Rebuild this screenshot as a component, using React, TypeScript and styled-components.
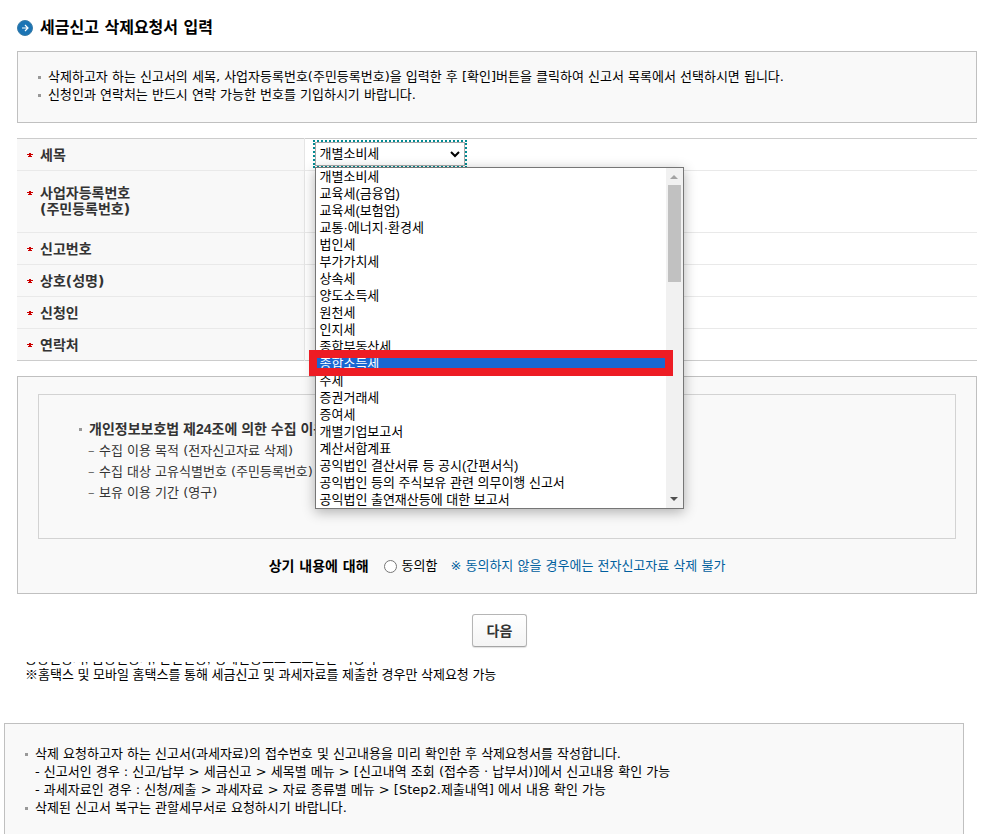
import React, { useState } from "react";
import styled, { createGlobalStyle, css } from "styled-components";

const bodyFont = `"DejaVu Sans", "Noto Sans CJK KR", sans-serif`;
const compactFont = `"Liberation Sans", "Noto Sans CJK KR", sans-serif`;

const GlobalStyle = createGlobalStyle`
  * { box-sizing: border-box; }
  body {
    margin: 0;
    background: #fff;
    color: #000;
    font: 13px/18px ${bodyFont};
    word-break: keep-all;
  }
  h1, p, ul { margin: 0; padding: 0; }
  ul { list-style: none; }
`;

const Page = styled.div`
  display: flex;
  flex-direction: column;
  min-height: 100vh;
`;

const Main = styled.main`
  padding: 18px 12px 0 17px;
`;

const Title = styled.h1`
  display: flex;
  align-items: center;
  gap: 7px;
  height: 20px;
  font-size: 16px;
  line-height: 20px;
`;

const Panel = styled.section`
  border: 1px solid #c0c0c0;
  background: #f9f9f9;
`;

const Notice = styled(Panel)`
  margin-top: 13px;
  min-height: 72px;
  padding: 16px 20px;
`;

const bullet = css`
  &::before {
    content: "";
    flex: none;
    width: 3px;
    height: 3px;
    margin-right: 7px;
    background: #999;
  }
`;

const BulletItem = styled.li`
  display: flex;
  align-items: center;
  ${bullet}
`;

const SubItem = styled.li`
  padding-left: 10px;
`;

const FormTable = styled.table`
  width: 100%;
  margin-top: 15px;
  border-collapse: collapse;
  table-layout: fixed;
  border-top: 1px solid #ccc;
  border-bottom: 1px solid #ccc;
`;

const FormRow = styled.tr<{ $tall?: boolean }>`
  height: ${(p) => (p.$tall ? 62 : 32)}px;
  & + & {
    border-top: 1px solid #e9e9e9;
  }
`;

const LabelCell = styled.th`
  width: 287px;
  padding: 0 10px;
  border-right: 1px solid #e5e5e5;
  background: #f8f8f8;
  color: #333;
  font-size: 14px;
  line-height: 16px;
  text-align: left;
  vertical-align: middle;
`;

const LabelText = styled.span<{ $tall?: boolean }>`
  display: flex;
  gap: 7px;
  padding-bottom: ${(p) => (p.$tall ? 2 : 0)}px;
`;

const Required = styled.span`
  display: flex;
  width: 6px;
  height: 16px;
  align-items: center;
`;

const FieldCell = styled.td`
  padding: 1px 0 0 8px;
  vertical-align: top;
`;

const SelectWrap = styled.div`
  position: relative;
  width: 154px;
  height: 28px;
  border: 2px dotted #008a91;
  font-family: ${compactFont};
`;

const TaxSelect = styled.select`
  display: block;
  width: 100%;
  height: 24px;
  padding: 0 20px 0 4px;
  border: 1px solid #aaa;
  border-radius: 0;
  outline: 0;
  appearance: none;
  background: #fff;
  color: #000;
  font: inherit;
`;

const Chevron = styled.svg`
  position: absolute;
  top: 9px;
  right: 5px;
  pointer-events: none;
`;

const Popup = styled.div`
  position: absolute;
  z-index: 2;
  top: 25px;
  left: 0;
  display: flex;
  width: 369px;
  border: 1px solid #767676;
  background: #fff;
  box-shadow: 0 3px 12px rgba(0, 0, 0, 0.3);
`;

const OptionList = styled.ul`
  flex: 1;
`;

const Option = styled.li<{ $active: boolean }>`
  position: relative;
  height: 17px;
  padding-left: 4px;
  line-height: 17px;
  white-space: nowrap;
  cursor: default;
  background: ${(p) => (p.$active ? "#1967d2" : "#fff")};
  color: ${(p) => (p.$active ? "#fff" : "#000")};
`;

const Highlight = styled.span`
  position: absolute;
  z-index: 1;
  top: -5px;
  right: -7px;
  bottom: -4px;
  left: -7px;
  border: 8px solid #ed1c24;
`;

const ScrollTrack = styled.div`
  display: flex;
  flex-direction: column;
  align-items: center;
  width: 17px;
  padding: 7px 0;
  background: #f1f1f1;
`;

const ScrollThumb = styled.div`
  width: 13px;
  height: 97px;
  margin: 6px 0 auto;
  background: #c1c1c1;
`;

const Consent = styled(Panel)`
  margin-top: 15px;
  padding: 17px 20px 18px;
`;

const ConsentText = styled.div`
  min-height: 145px;
  padding: 24px 40px;
  border: 1px solid #d3d3d3;
  color: #333;
  line-height: 21px;
`;

const ConsentHead = styled.p`
  display: flex;
  align-items: center;
  font-family: ${compactFont};
  font-size: 14px;
  font-weight: bold;
  white-space: nowrap;
  ${bullet}
`;

const DashItem = styled.li`
  display: flex;
  padding-left: 9px;
  &::before {
    content: "–";
    width: 11px;
    color: #666;
  }
`;

const AgreeRow = styled.div`
  display: flex;
  flex-wrap: wrap;
  align-items: center;
  justify-content: center;
  margin-top: 18px;
  line-height: 18px;
`;

const AgreeTitle = styled.strong`
  margin-right: 15px;
  font-size: 14px;
`;

const AgreeLabel = styled.label`
  display: flex;
  align-items: center;
  gap: 5px;
  margin-right: 13px;
`;

const Radio = styled.input`
  width: 13px;
  height: 13px;
  margin: 0;
`;

const AgreeNote = styled.span`
  color: #005f9e;
`;

const Actions = styled.div`
  display: flex;
  justify-content: center;
  padding: 20px 0 0 5px;
`;

const NextButton = styled.button`
  height: 33px;
  padding: 0 14px;
  border: 1px solid #b5b5b5;
  border-bottom-color: #a5a5a5;
  border-radius: 3px;
  background: linear-gradient(#fff, #f4f4f4);
  box-shadow: 0 1px 1px rgba(0, 0, 0, 0.12);
  color: #333;
  font: bold 14px/20px ${bodyFont};
`;

const Remarks = styled.div`
  padding: 15px 8px 0;
  font-family: ${compactFont};
`;

const CutLine = styled.p`
  display: flex;
  align-items: flex-end;
  height: 4px;
  overflow: hidden;
  line-height: 14px;
`;

const Guide = styled(Panel)`
  flex: 1;
  margin: 39px 25px 0 4px;
  padding: 21px 20px 16px;
  border-bottom: 0;
`;

const TAXES = [
  "개별소비세",
  "교육세(금융업)",
  "교육세(보험업)",
  "교통·에너지·환경세",
  "법인세",
  "부가가치세",
  "상속세",
  "양도소득세",
  "원천세",
  "인지세",
  "종합부동산세",
  "종합소득세",
  "주세",
  "증권거래세",
  "증여세",
  "개별기업보고서",
  "계산서합계표",
  "공익법인 결산서류 등 공시(간편서식)",
  "공익법인 등의 주식보유 관련 의무이행 신고서",
  "공익법인 출연재산등에 대한 보고서",
];

function RequiredMark() {
  return (
    <Required>
      <svg width="6" height="4" viewBox="0 0 6 4" aria-label="필수" role="img">
        <path d="M2 0h2v1H2zM0 1h6v1H0zM2 2h2v1H2zM1 3h4v1H1z" fill="#c00" />
      </svg>
    </Required>
  );
}

function Field({
  label,
  tall,
  htmlFor,
  children,
}: {
  label: React.ReactNode;
  tall?: boolean;
  htmlFor?: string;
  children?: React.ReactNode;
}) {
  return (
    <FormRow $tall={tall}>
      <LabelCell scope="row">
        <LabelText $tall={tall}>
          <RequiredMark />
          {htmlFor ? <label htmlFor={htmlFor}>{label}</label> : <span>{label}</span>}
        </LabelText>
      </LabelCell>
      <FieldCell>{children}</FieldCell>
    </FormRow>
  );
}

function TaxPicker() {
  const [value, setValue] = useState(TAXES[0]);
  const [active, setActive] = useState("종합소득세");
  return (
    <SelectWrap>
      <TaxSelect id="tax" value={value} onChange={(e) => setValue(e.target.value)}>
        {TAXES.map((t) => (
          <option key={t}>{t}</option>
        ))}
      </TaxSelect>
      <Chevron width="10" height="7" viewBox="0 0 10 7">
        <path d="M1 1l4 4 4-4" fill="none" stroke="#000" strokeWidth="2" />
      </Chevron>
      <Popup>
        <OptionList role="listbox" aria-label="세목">
          {TAXES.map((t) => (
            <Option
              key={t}
              role="option"
              aria-selected={t === active}
              $active={t === active}
              onMouseEnter={() => setActive(t)}
              onClick={() => setValue(t)}
            >
              {t}
              {t === "종합소득세" && <Highlight />}
            </Option>
          ))}
        </OptionList>
        <ScrollTrack>
          <svg width="8" height="4" viewBox="0 0 8 4">
            <path d="M0 4l4-4 4 4z" fill="#a3a3a3" />
          </svg>
          <ScrollThumb />
          <svg width="8" height="4" viewBox="0 0 8 4">
            <path d="M0 0h8L4 4z" fill="#505050" />
          </svg>
        </ScrollTrack>
      </Popup>
    </SelectWrap>
  );
}

export default function App() {
  const [agreed, setAgreed] = useState(false);
  return (
    <Page>
      <GlobalStyle />
      <Main>
        <Title>
          <svg width="16" height="16" viewBox="0 0 16 16" aria-hidden="true">
            <circle cx="8" cy="8" r="7.5" fill="#1b74b4" stroke="#3a7ca8" />
            <path d="M5 8h6M8 5l3 3-3 3" fill="none" stroke="#fff" strokeWidth="1.2" />
          </svg>
          세금신고 삭제요청서 입력
        </Title>

        <Notice>
          <ul>
            <BulletItem>
              삭제하고자 하는 신고서의 세목, 사업자등록번호(주민등록번호)을 입력한 후 [확인]버튼을 클릭하여 신고서 목록에서 선택하시면 됩니다.
            </BulletItem>
            <BulletItem>신청인과 연락처는 반드시 연락 가능한 번호를 기입하시기 바랍니다.</BulletItem>
          </ul>
        </Notice>

        <FormTable>
          <tbody>
            <Field label="세목" htmlFor="tax">
              <TaxPicker />
            </Field>
            <Field
              tall
              label={
                <>
                  사업자등록번호
                  <br />
                  (주민등록번호)
                </>
              }
            />
            <Field label="신고번호" />
            <Field label="상호(성명)" />
            <Field label="신청인" />
            <Field label="연락처" />
          </tbody>
        </FormTable>

        <Consent>
          <ConsentText>
            <ConsentHead>개인정보보호법 제24조에 의한 수집 이용</ConsentHead>
            <ul>
              <DashItem>수집 이용 목적 (전자신고자료 삭제)</DashItem>
              <DashItem>수집 대상 고유식별번호 (주민등록번호)</DashItem>
              <DashItem>보유 이용 기간 (영구)</DashItem>
            </ul>
          </ConsentText>
          <AgreeRow>
            <AgreeTitle>상기 내용에 대해</AgreeTitle>
            <AgreeLabel>
              <Radio type="radio" name="agree" checked={agreed} onChange={() => setAgreed(true)} />
              동의함
            </AgreeLabel>
            <AgreeNote>※ 동의하지 않을 경우에는 전자신고자료 삭제 불가</AgreeNote>
          </AgreeRow>
        </Consent>

        <Actions>
          <NextButton type="button">다음</NextButton>
        </Actions>

        <Remarks>
          <CutLine>공동인증서, 금융인증서, 간편인증, 생체인증으로 로그인한 이용자</CutLine>
          <p>※홈택스 및 모바일 홈택스를 통해 세금신고 및 과세자료를 제출한 경우만 삭제요청 가능</p>
        </Remarks>
      </Main>

      <Guide>
        <ul>
          <BulletItem>삭제 요청하고자 하는 신고서(과세자료)의 접수번호 및 신고내용을 미리 확인한 후 삭제요청서를 작성합니다.</BulletItem>
          <SubItem>- 신고서인 경우 : 신고/납부 &gt; 세금신고 &gt; 세목별 메뉴 &gt; [신고내역 조회 (접수증 · 납부서)]에서 신고내용 확인 가능</SubItem>
          <SubItem>- 과세자료인 경우 : 신청/제출 &gt; 과세자료 &gt; 자료 종류별 메뉴 &gt; [Step2.제출내역] 에서 내용 확인 가능</SubItem>
          <BulletItem>삭제된 신고서 복구는 관할세무서로 요청하시기 바랍니다.</BulletItem>
        </ul>
      </Guide>
    </Page>
  );
}
